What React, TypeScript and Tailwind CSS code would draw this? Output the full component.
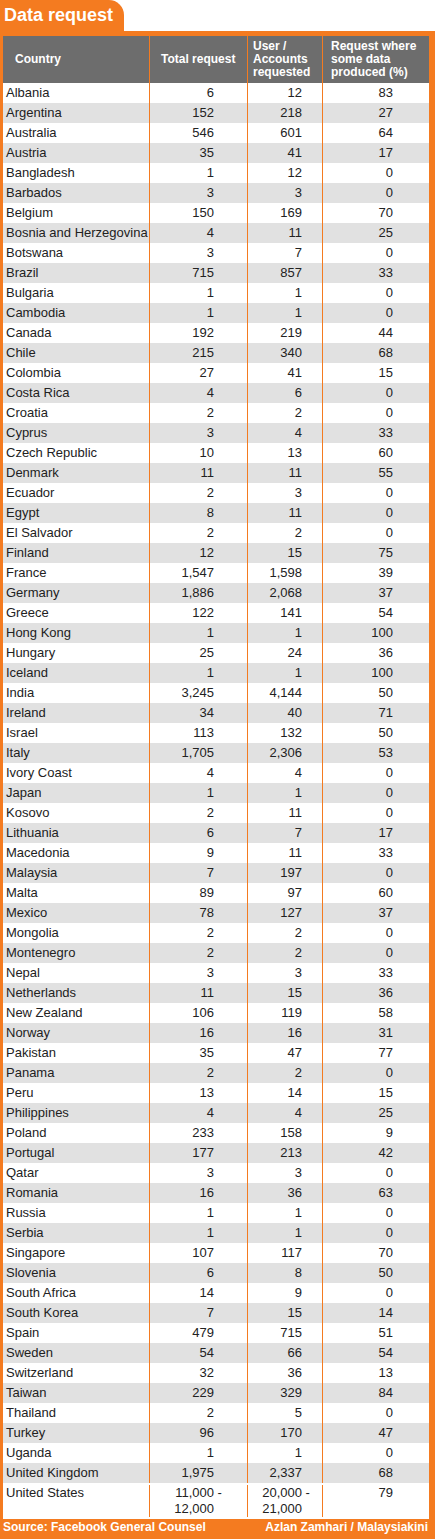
const rows: [string, string, string, string][] = [
  ["Albania", "6", "12", "83"],
  ["Argentina", "152", "218", "27"],
  ["Australia", "546", "601", "64"],
  ["Austria", "35", "41", "17"],
  ["Bangladesh", "1", "12", "0"],
  ["Barbados", "3", "3", "0"],
  ["Belgium", "150", "169", "70"],
  ["Bosnia and Herzegovina", "4", "11", "25"],
  ["Botswana", "3", "7", "0"],
  ["Brazil", "715", "857", "33"],
  ["Bulgaria", "1", "1", "0"],
  ["Cambodia", "1", "1", "0"],
  ["Canada", "192", "219", "44"],
  ["Chile", "215", "340", "68"],
  ["Colombia", "27", "41", "15"],
  ["Costa Rica", "4", "6", "0"],
  ["Croatia", "2", "2", "0"],
  ["Cyprus", "3", "4", "33"],
  ["Czech Republic", "10", "13", "60"],
  ["Denmark", "11", "11", "55"],
  ["Ecuador", "2", "3", "0"],
  ["Egypt", "8", "11", "0"],
  ["El Salvador", "2", "2", "0"],
  ["Finland", "12", "15", "75"],
  ["France", "1,547", "1,598", "39"],
  ["Germany", "1,886", "2,068", "37"],
  ["Greece", "122", "141", "54"],
  ["Hong Kong", "1", "1", "100"],
  ["Hungary", "25", "24", "36"],
  ["Iceland", "1", "1", "100"],
  ["India", "3,245", "4,144", "50"],
  ["Ireland", "34", "40", "71"],
  ["Israel", "113", "132", "50"],
  ["Italy", "1,705", "2,306", "53"],
  ["Ivory Coast", "4", "4", "0"],
  ["Japan", "1", "1", "0"],
  ["Kosovo", "2", "11", "0"],
  ["Lithuania", "6", "7", "17"],
  ["Macedonia", "9", "11", "33"],
  ["Malaysia", "7", "197", "0"],
  ["Malta", "89", "97", "60"],
  ["Mexico", "78", "127", "37"],
  ["Mongolia", "2", "2", "0"],
  ["Montenegro", "2", "2", "0"],
  ["Nepal", "3", "3", "33"],
  ["Netherlands", "11", "15", "36"],
  ["New Zealand", "106", "119", "58"],
  ["Norway", "16", "16", "31"],
  ["Pakistan", "35", "47", "77"],
  ["Panama", "2", "2", "0"],
  ["Peru", "13", "14", "15"],
  ["Philippines", "4", "4", "25"],
  ["Poland", "233", "158", "9"],
  ["Portugal", "177", "213", "42"],
  ["Qatar", "3", "3", "0"],
  ["Romania", "16", "36", "63"],
  ["Russia", "1", "1", "0"],
  ["Serbia", "1", "1", "0"],
  ["Singapore", "107", "117", "70"],
  ["Slovenia", "6", "8", "50"],
  ["South Africa", "14", "9", "0"],
  ["South Korea", "7", "15", "14"],
  ["Spain", "479", "715", "51"],
  ["Sweden", "54", "66", "54"],
  ["Switzerland", "32", "36", "13"],
  ["Taiwan", "229", "329", "84"],
  ["Thailand", "2", "5", "0"],
  ["Turkey", "96", "170", "47"],
  ["Uganda", "1", "1", "0"],
  ["United Kingdom", "1,975", "2,337", "68"],
];

const cols = "grid grid-cols-[147px_98px_75px_106px]";

export default function App() {
  return (
    <div className="w-[435px] bg-white font-['Liberation_Sans',Arial,sans-serif]">
      {/* title tab */}
      <div className="h-[31px] w-[124px] rounded-tr-[15px] bg-[#f47b20] pl-[4px] pt-[3px] text-[18px] font-bold leading-[24px] text-white">
        Data request
      </div>

      <div className="border-t-[5px] border-r-[6px] border-l-[3px] border-[#f47b20]">
        {/* header */}
        <div className={`${cols} h-[47px] bg-[#6d6d6d] text-[12px] font-bold leading-[13px] text-white`}>
          <div className="flex items-center border-r border-[#f47b20] pl-[12px]">Country</div>
          <div className="flex items-center border-r border-[#f47b20] pl-[11px]">Total request</div>
          <div className="flex items-center border-r border-[#f47b20] pl-[5px]">
            User /<br />Accounts<br />requested
          </div>
          <div className="flex items-center pl-[8px]">
            Request where<br />some data<br />produced (%)
          </div>
        </div>

        {/* rows */}
        <div className="text-[13px] text-[#222]">
          {rows.map(([country, total, users, pct], i) => (
            <div
              key={country}
              className={`${cols} h-[20px] leading-[20px] ${i % 2 ? "bg-[#e1e1e1]" : "bg-white"}`}
            >
              <div className="whitespace-nowrap border-r border-[#f47b20] pl-[3px]">{country}</div>
              <div className="border-r border-[#f47b20] pr-[33px] text-right">{total}</div>
              <div className="border-r border-[#f47b20] pr-[20px] text-right">{users}</div>
              <div className="pr-[36px] text-right">{pct}</div>
            </div>
          ))}

          <div className={`${cols} h-[36px] bg-white py-[2px] leading-[16px]`}>
            <div className="border-r border-[#f47b20] pl-[3px]">United States</div>
            <div className="border-r border-[#f47b20] pr-[33px] text-right">
              11,000
              <span className="inline-block w-0 whitespace-nowrap text-left">&nbsp;-</span>
              <br />
              12,000
            </div>
            <div className="border-r border-[#f47b20] pr-[20px] text-right">
              20,000
              <span className="inline-block w-0 whitespace-nowrap text-left">&nbsp;-</span>
              <br />
              21,000
            </div>
            <div className="pr-[36px] text-right">79</div>
          </div>
        </div>
      </div>

      {/* footer */}
      <div className="flex h-[20px] items-start justify-between bg-[#f47b20] px-[3px] pt-[1px] text-[12px] font-bold leading-[15px] text-white">
        <span>Source: Facebook General Counsel</span>
        <span className="pr-[4px]">Azlan Zamhari / Malaysiakini</span>
      </div>
    </div>
  );
}
